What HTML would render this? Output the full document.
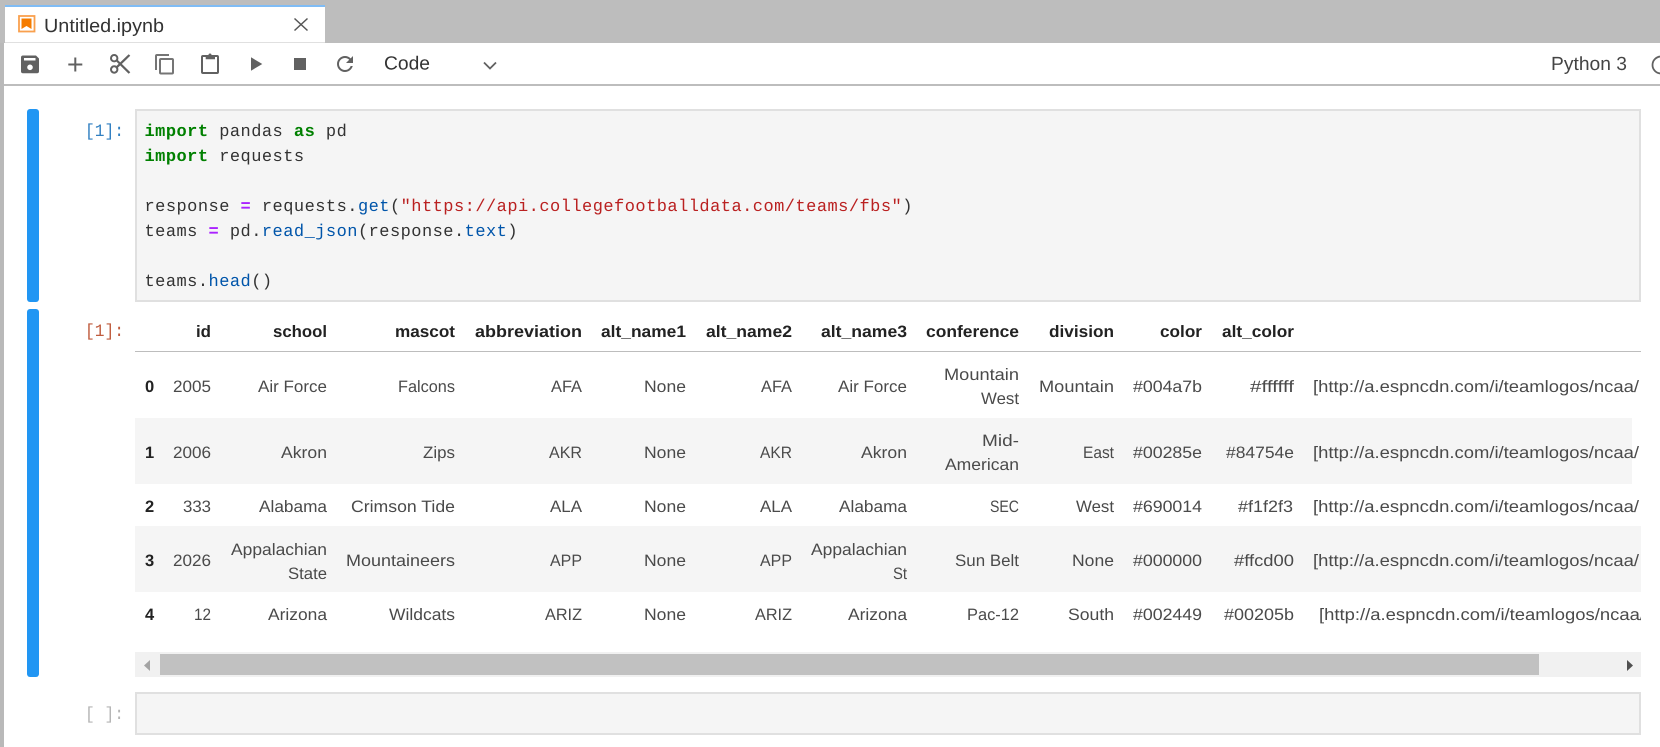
<!DOCTYPE html>
<html lang="en">
<head>
<meta charset="utf-8">
<title>Untitled.ipynb</title>
<style>
html,body{margin:0;padding:0;width:1660px;height:747px;overflow:hidden;background:#fff}
svg{display:block;position:absolute;left:0;top:0}
text{font-family:"Liberation Sans",Arial,sans-serif;font-size:16.500px;fill:#4a4a4a;white-space:pre;text-rendering:geometricPrecision}
.r{text-anchor:end}
.h{font-weight:bold;fill:#222}
.b{font-weight:bold;fill:#222}
.c{font-family:"Liberation Mono",monospace;font-size:17px;letter-spacing:.47px;fill:#333}
.k{font-weight:bold;fill:#008000}
.o{font-weight:bold;fill:#aa22ff}
.f{fill:#0055aa}
.s{fill:#ba2121}
.p{font-family:"Liberation Mono",monospace;font-size:17.500px}
.u{font-size:19px;fill:#333}
</style>
</head>
<body>
<svg width="1660" height="747" viewBox="0 0 1660 747" xmlns="http://www.w3.org/2000/svg">
<rect x="0" y="0" width="1660" height="43" fill="#bdbdbd"/>
<rect x="0" y="43" width="4" height="704" fill="#b9b9b9"/>
<rect x="5" y="5" width="320" height="38" fill="#fff"/>
<rect x="5" y="5" width="320" height="2" fill="#7fbcf5"/>
<rect x="5" y="42" width="320" height="1" fill="#e0e0e0"/>
<rect x="19" y="16" width="15.500" height="15.500" fill="#fff" stroke="#f9a04e" stroke-width="1.800"/>
<path d="M21.500 18.500h10v10.500l-5-3-5 3z" fill="#f57c00"/>
<text x="44" y="32" class="u" textLength="120" lengthAdjust="spacingAndGlyphs">Untitled.ipynb</text>
<path d="M294.500 18.500l13 12M307.500 18.500l-13 12" stroke="#555" stroke-width="1.500" fill="none"/>

<rect x="4" y="43" width="1656" height="41" fill="#fff"/>
<rect x="4" y="84" width="1656" height="2" fill="#bdbdbd"/>

<path fill="#616161" fill-rule="evenodd" d="M23 55.500h13l3 3V71.300a2 2 0 0 1-2 2H23a2 2 0 0 1-2-2V57.500a2 2 0 0 1 2-2zM24 58v2.500h11.500V58zM30 64.500a2.800 2.800 0 1 0 0 5.600 2.800 2.800 0 0 0 0-5.600z"/>
<path fill="#616161" d="M68.300 63.500h14v2h-14zM74.300 57.500h2v14h-2z"/>
<g fill="none" stroke="#616161" stroke-width="2">
<circle cx="114.200" cy="58.200" r="3.200"/>
<circle cx="114.200" cy="69.500" r="3.200"/>
<path stroke-width="2.200" d="M116.800 60.500L129.500 73M116.800 67.200L129.500 55"/>
</g>
<g fill="none" stroke="#757575" stroke-width="2">
<path d="M169 55H157a1 1 0 0 0-1 1V70"/>
<rect x="160" y="59" width="13" height="14.500" rx="1"/>
</g>
<g fill="#616161">
<rect x="202" y="56" width="16" height="17" rx="1" fill="none" stroke="#616161" stroke-width="2"/>
<path d="M205.700 55h2.800a1.500 1.500 0 0 1 3 0h3.500v4.200h-9.300z"/>
<path d="M251 57.300l11.300 6.700-11.300 6.700z"/>
<rect x="294" y="58" width="12" height="12"/>
<path transform="translate(333,52)" d="M17.650 6.350C16.200 4.900 14.210 4 12 4c-4.420 0-7.990 3.580-7.990 8s3.570 8 7.990 8c3.730 0 6.840-2.550 7.730-6h-2.080c-.82 2.330-3.040 4-5.650 4-3.310 0-6-2.690-6-6s2.690-6 6-6c1.660 0 3.140.69 4.220 1.780L13 11h7V4l-2.350 2.350z"/>
</g>
<text x="384" y="69.500" class="u" textLength="46" lengthAdjust="spacingAndGlyphs">Code</text>
<path d="M484 62.500l6 6 6-6" fill="none" stroke="#616161" stroke-width="1.800"/>
<text x="1551" y="70" class="u" textLength="76" lengthAdjust="spacingAndGlyphs" style="fill:#444">Python 3</text>
<circle cx="1661" cy="65" r="8.500" fill="none" stroke="#616161" stroke-width="1.800"/>

<rect x="27" y="109" width="12" height="193" rx="3" fill="#2196f3"/>
<rect x="27" y="309" width="12" height="368" rx="3" fill="#2196f3"/>

<text x="85" y="136" class="p" style="fill:#307fc1" textLength="39" lengthAdjust="spacingAndGlyphs">[1]:</text>
<text x="85" y="336" class="p" style="fill:#bf5b3d" textLength="39" lengthAdjust="spacingAndGlyphs">[1]:</text>
<text x="85" y="719" class="p" style="fill:#b5b5b5" textLength="39" lengthAdjust="spacingAndGlyphs">[ ]:</text>

<rect x="136" y="110" width="1504" height="191" fill="#f5f5f5" stroke="#e0e0e0" stroke-width="2"/>
<text x="144.500" y="136" class="c"><tspan class="k">import</tspan> pandas <tspan class="k">as</tspan> pd</text>
<text x="144.500" y="161" class="c"><tspan class="k">import</tspan> requests</text>
<text x="144.500" y="211" class="c">response <tspan class="o">=</tspan> requests.<tspan class="f">get</tspan>(<tspan class="s">"https://api.collegefootballdata.com/teams/fbs"</tspan>)</text>
<text x="144.500" y="236" class="c">teams <tspan class="o">=</tspan> pd.<tspan class="f">read_json</tspan>(response.<tspan class="f">text</tspan>)</text>
<text x="144.500" y="286" class="c">teams.<tspan class="f">head</tspan>()</text>

<rect x="135" y="351" width="1506" height="1" fill="#bdbdbd"/>
<rect x="135" y="418" width="1497" height="66" fill="#f5f5f5"/>
<rect x="135" y="526" width="1506" height="66" fill="#f5f5f5"/>

<g>
<text class="r h" y="337" x="211" textLength="15" lengthAdjust="spacingAndGlyphs">id</text>
<text class="r h" y="337" x="327" textLength="54" lengthAdjust="spacingAndGlyphs">school</text>
<text class="r h" y="337" x="455" textLength="60" lengthAdjust="spacingAndGlyphs">mascot</text>
<text class="r h" y="337" x="582" textLength="107" lengthAdjust="spacingAndGlyphs">abbreviation</text>
<text class="r h" y="337" x="686" textLength="85" lengthAdjust="spacingAndGlyphs">alt_name1</text>
<text class="r h" y="337" x="792" textLength="86" lengthAdjust="spacingAndGlyphs">alt_name2</text>
<text class="r h" y="337" x="907" textLength="86" lengthAdjust="spacingAndGlyphs">alt_name3</text>
<text class="r h" y="337" x="1019" textLength="93" lengthAdjust="spacingAndGlyphs">conference</text>
<text class="r h" y="337" x="1114" textLength="65" lengthAdjust="spacingAndGlyphs">division</text>
<text class="r h" y="337" x="1202" textLength="42" lengthAdjust="spacingAndGlyphs">color</text>
<text class="r h" y="337" x="1294" textLength="72" lengthAdjust="spacingAndGlyphs">alt_color</text>
</g>

<g>
<text class="b" y="392" x="145">0</text>
<text class="r" y="392" x="211" textLength="38" lengthAdjust="spacingAndGlyphs">2005</text>
<text class="r" y="392" x="327" textLength="69" lengthAdjust="spacingAndGlyphs">Air Force</text>
<text class="r" y="392" x="455" textLength="57" lengthAdjust="spacingAndGlyphs">Falcons</text>
<text class="r" y="392" x="582" textLength="31" lengthAdjust="spacingAndGlyphs">AFA</text>
<text class="r" y="392" x="686" textLength="42" lengthAdjust="spacingAndGlyphs">None</text>
<text class="r" y="392" x="792" textLength="31" lengthAdjust="spacingAndGlyphs">AFA</text>
<text class="r" y="392" x="907" textLength="69" lengthAdjust="spacingAndGlyphs">Air Force</text>
<text class="r" y="380" x="1019" textLength="75" lengthAdjust="spacingAndGlyphs">Mountain</text>
<text class="r" y="404" x="1019" textLength="38" lengthAdjust="spacingAndGlyphs">West</text>
<text class="r" y="392" x="1114" textLength="75" lengthAdjust="spacingAndGlyphs">Mountain</text>
<text class="r" y="392" x="1202" textLength="69" lengthAdjust="spacingAndGlyphs">#004a7b</text>
<text class="r" y="392" x="1294" textLength="44" lengthAdjust="spacingAndGlyphs">#ffffff</text>
<text y="392" x="1313" textLength="326" lengthAdjust="spacingAndGlyphs">[http://a.espncdn.com/i/teamlogos/ncaa/</text>
</g>

<g>
<text class="b" y="458" x="145">1</text>
<text class="r" y="458" x="211" textLength="38" lengthAdjust="spacingAndGlyphs">2006</text>
<text class="r" y="458" x="327" textLength="46" lengthAdjust="spacingAndGlyphs">Akron</text>
<text class="r" y="458" x="455" textLength="32" lengthAdjust="spacingAndGlyphs">Zips</text>
<text class="r" y="458" x="582" textLength="33" lengthAdjust="spacingAndGlyphs">AKR</text>
<text class="r" y="458" x="686" textLength="42" lengthAdjust="spacingAndGlyphs">None</text>
<text class="r" y="458" x="792" textLength="32" lengthAdjust="spacingAndGlyphs">AKR</text>
<text class="r" y="458" x="907" textLength="46" lengthAdjust="spacingAndGlyphs">Akron</text>
<text class="r" y="446" x="1019" textLength="37" lengthAdjust="spacingAndGlyphs">Mid-</text>
<text class="r" y="470" x="1019" textLength="74" lengthAdjust="spacingAndGlyphs">American</text>
<text class="r" y="458" x="1114" textLength="31" lengthAdjust="spacingAndGlyphs">East</text>
<text class="r" y="458" x="1202" textLength="69" lengthAdjust="spacingAndGlyphs">#00285e</text>
<text class="r" y="458" x="1294" textLength="68" lengthAdjust="spacingAndGlyphs">#84754e</text>
<text y="458" x="1313" textLength="326" lengthAdjust="spacingAndGlyphs">[http://a.espncdn.com/i/teamlogos/ncaa/</text>
</g>

<g>
<text class="b" y="512" x="145">2</text>
<text class="r" y="512" x="211" textLength="28" lengthAdjust="spacingAndGlyphs">333</text>
<text class="r" y="512" x="327" textLength="68" lengthAdjust="spacingAndGlyphs">Alabama</text>
<text class="r" y="512" x="455" textLength="104" lengthAdjust="spacingAndGlyphs">Crimson Tide</text>
<text class="r" y="512" x="582" textLength="32" lengthAdjust="spacingAndGlyphs">ALA</text>
<text class="r" y="512" x="686" textLength="42" lengthAdjust="spacingAndGlyphs">None</text>
<text class="r" y="512" x="792" textLength="32" lengthAdjust="spacingAndGlyphs">ALA</text>
<text class="r" y="512" x="907" textLength="68" lengthAdjust="spacingAndGlyphs">Alabama</text>
<text class="r" y="512" x="1019" textLength="29" lengthAdjust="spacingAndGlyphs">SEC</text>
<text class="r" y="512" x="1114" textLength="38" lengthAdjust="spacingAndGlyphs">West</text>
<text class="r" y="512" x="1202" textLength="69" lengthAdjust="spacingAndGlyphs">#690014</text>
<text class="r" y="512" x="1293" textLength="55" lengthAdjust="spacingAndGlyphs">#f1f2f3</text>
<text y="512" x="1313" textLength="326" lengthAdjust="spacingAndGlyphs">[http://a.espncdn.com/i/teamlogos/ncaa/</text>
</g>

<g>
<text class="b" y="566" x="145">3</text>
<text class="r" y="566" x="211" textLength="38" lengthAdjust="spacingAndGlyphs">2026</text>
<text class="r" y="555" x="327" textLength="96" lengthAdjust="spacingAndGlyphs">Appalachian</text>
<text class="r" y="579" x="327" textLength="39" lengthAdjust="spacingAndGlyphs">State</text>
<text class="r" y="566" x="455" textLength="109" lengthAdjust="spacingAndGlyphs">Mountaineers</text>
<text class="r" y="566" x="582" textLength="32" lengthAdjust="spacingAndGlyphs">APP</text>
<text class="r" y="566" x="686" textLength="42" lengthAdjust="spacingAndGlyphs">None</text>
<text class="r" y="566" x="792" textLength="32" lengthAdjust="spacingAndGlyphs">APP</text>
<text class="r" y="555" x="907" textLength="96" lengthAdjust="spacingAndGlyphs">Appalachian</text>
<text class="r" y="579" x="907" textLength="14" lengthAdjust="spacingAndGlyphs">St</text>
<text class="r" y="566" x="1019" textLength="64" lengthAdjust="spacingAndGlyphs">Sun Belt</text>
<text class="r" y="566" x="1114" textLength="42" lengthAdjust="spacingAndGlyphs">None</text>
<text class="r" y="566" x="1202" textLength="69" lengthAdjust="spacingAndGlyphs">#000000</text>
<text class="r" y="566" x="1294" textLength="60" lengthAdjust="spacingAndGlyphs">#ffcd00</text>
<text y="566" x="1313" textLength="326" lengthAdjust="spacingAndGlyphs">[http://a.espncdn.com/i/teamlogos/ncaa/</text>
</g>

<g>
<text class="b" y="620" x="145">4</text>
<text class="r" y="620" x="211" textLength="17" lengthAdjust="spacingAndGlyphs">12</text>
<text class="r" y="620" x="327" textLength="59" lengthAdjust="spacingAndGlyphs">Arizona</text>
<text class="r" y="620" x="455" textLength="66" lengthAdjust="spacingAndGlyphs">Wildcats</text>
<text class="r" y="620" x="582" textLength="37" lengthAdjust="spacingAndGlyphs">ARIZ</text>
<text class="r" y="620" x="686" textLength="42" lengthAdjust="spacingAndGlyphs">None</text>
<text class="r" y="620" x="792" textLength="37" lengthAdjust="spacingAndGlyphs">ARIZ</text>
<text class="r" y="620" x="907" textLength="59" lengthAdjust="spacingAndGlyphs">Arizona</text>
<text class="r" y="620" x="1019" textLength="52" lengthAdjust="spacingAndGlyphs">Pac-12</text>
<text class="r" y="620" x="1114" textLength="46" lengthAdjust="spacingAndGlyphs">South</text>
<text class="r" y="620" x="1202" textLength="69" lengthAdjust="spacingAndGlyphs">#002449</text>
<text class="r" y="620" x="1294" textLength="70" lengthAdjust="spacingAndGlyphs">#00205b</text>
<text y="620" x="1319" textLength="326" lengthAdjust="spacingAndGlyphs">[http://a.espncdn.com/i/teamlogos/ncaa/</text>
</g>
<rect x="1641" y="600" width="19" height="30" fill="#fff"/>

<rect x="135" y="652" width="1506" height="25" fill="#f1f1f1"/>
<rect x="160" y="654" width="1379" height="21" fill="#c1c1c1"/>
<path d="M150 660v11l-6-5.500z" fill="#a3a3a3"/>
<path d="M1627 660v11l6-5.500z" fill="#505050"/>

<rect x="136" y="693" width="1504" height="41" fill="#f5f5f5" stroke="#e0e0e0" stroke-width="2"/>
</svg>
</body>
</html>
